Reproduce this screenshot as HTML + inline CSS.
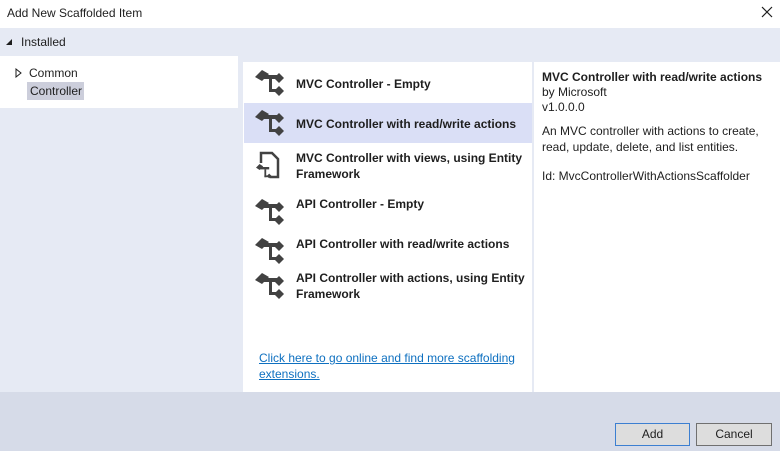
<!DOCTYPE html>
<html><head><meta charset="utf-8"><style>
*{margin:0;padding:0;box-sizing:border-box}
body{width:780px;height:451px;overflow:hidden;background:#e6eaf4;font-family:"Segoe UI","Liberation Sans",sans-serif;font-size:12px;color:#1e1e1e;position:relative}
.a{position:absolute;white-space:nowrap}
.b{font-weight:bold}
</style></head><body>
<div class="a" style="left:0;top:0;width:780px;height:28px;background:#fff"></div>
<div class="a" style="left:7px;top:6px;font-size:12px">Add New Scaffolded Item</div>
<svg class="a" style="left:761px;top:6px" width="12" height="12"><path d="M1 1L11 11M11 1L1 11" stroke="#1e1e1e" stroke-width="1.2"/></svg>
<svg class="a" style="left:6px;top:39px" width="7" height="7"><path d="M6 0L6 6L0 6Z" fill="#1e1e1e"/></svg>
<div class="a" style="left:21px;top:35px">Installed</div>
<div class="a" style="left:0;top:56px;width:238px;height:52px;background:#fff"></div>
<svg class="a" style="left:15px;top:68px" width="7" height="10"><path d="M1 1L6 5L1 9Z" fill="none" stroke="#1e1e1e"/></svg>
<div class="a" style="left:29px;top:66px">Common</div>
<div class="a" style="left:27px;top:82px;width:57px;height:18px;background:#cccedb"></div>
<div class="a" style="left:30px;top:84px">Controller</div>
<div class="a" style="left:243px;top:62px;width:289px;height:330px;background:#fff"></div>
<div class="a" style="left:534px;top:62px;width:246px;height:330px;background:#fff"></div>
<div class="a" style="left:244px;top:103px;width:288px;height:40px;background:#dadff6"></div>
<svg class="a" style="left:0;top:0" width="780" height="451">
<defs><g id="ic"><polygon points="255,77 262,70 269,74 262,81" fill="#424242"/><rect x="262" y="75" width="16" height="4" fill="#424242"/><polygon points="274,78 279,73 284,78 279,83" fill="#424242"/><rect x="269" y="79" width="3" height="13" fill="#424242"/><rect x="269" y="89" width="8" height="3" fill="#424242"/><polygon points="274,91 279,86 284,91 279,96" fill="#424242"/></g></defs>
<use href="#ic"/>
<use href="#ic" transform="translate(0,40)"/>
<use href="#ic" transform="translate(0,129)"/>
<use href="#ic" transform="translate(0,168)"/>
<use href="#ic" transform="translate(0,203)"/>
<path d="M261 153h11l6 6v18h-17z" fill="none" stroke="#424242" stroke-width="2.5"/>
<rect x="256" y="163" width="14" height="16" fill="#fff"/>
<g transform="translate(256,164) scale(0.6)"><polygon points="0,6 6,0 12,4 6,10" fill="#424242"/><rect x="6" y="5" width="16" height="4" fill="#424242"/><rect x="14" y="9" width="3" height="13" fill="#424242"/><rect x="14" y="19" width="10" height="3" fill="#424242"/><polygon points="18,20 22,16 26,20 22,24" fill="#424242"/></g>
</svg>
<div class="a b" style="left:296px;top:77px">MVC Controller - Empty</div>
<div class="a b" style="left:296px;top:117px">MVC Controller with read/write actions</div>
<div class="a b" style="left:296px;top:150px;line-height:16px">MVC Controller with views, using Entity<br>Framework</div>
<div class="a b" style="left:296px;top:197px">API Controller - Empty</div>
<div class="a b" style="left:296px;top:237px">API Controller with read/write actions</div>
<div class="a b" style="left:296px;top:270px;line-height:16px">API Controller with actions, using Entity<br>Framework</div>
<div class="a" style="left:259px;top:350px;line-height:16px;color:#0e70c0;text-decoration:underline">Click here to go online and find more scaffolding<br>extensions.</div>
<div class="a b" style="left:542px;top:70px">MVC Controller with read/write actions</div>
<div class="a" style="left:542px;top:85px">by Microsoft</div>
<div class="a" style="left:542px;top:100px">v1.0.0.0</div>
<div class="a" style="left:542px;top:123px;line-height:16px">An MVC controller with actions to create,<br>read, update, delete, and list entities.</div>
<div class="a" style="left:542px;top:169px">Id: MvcControllerWithActionsScaffolder</div>
<div class="a" style="left:0;top:392px;width:780px;height:59px;background:#d6dbe8"></div>
<div class="a" style="left:615px;top:423px;width:75px;height:23px;background:#dddddd;border:1px solid #3c7fd1;text-align:center;line-height:21px">Add</div>
<div class="a" style="left:696px;top:423px;width:76px;height:23px;background:#dddddd;border:1px solid #707070;text-align:center;line-height:21px">Cancel</div>
</body></html>
